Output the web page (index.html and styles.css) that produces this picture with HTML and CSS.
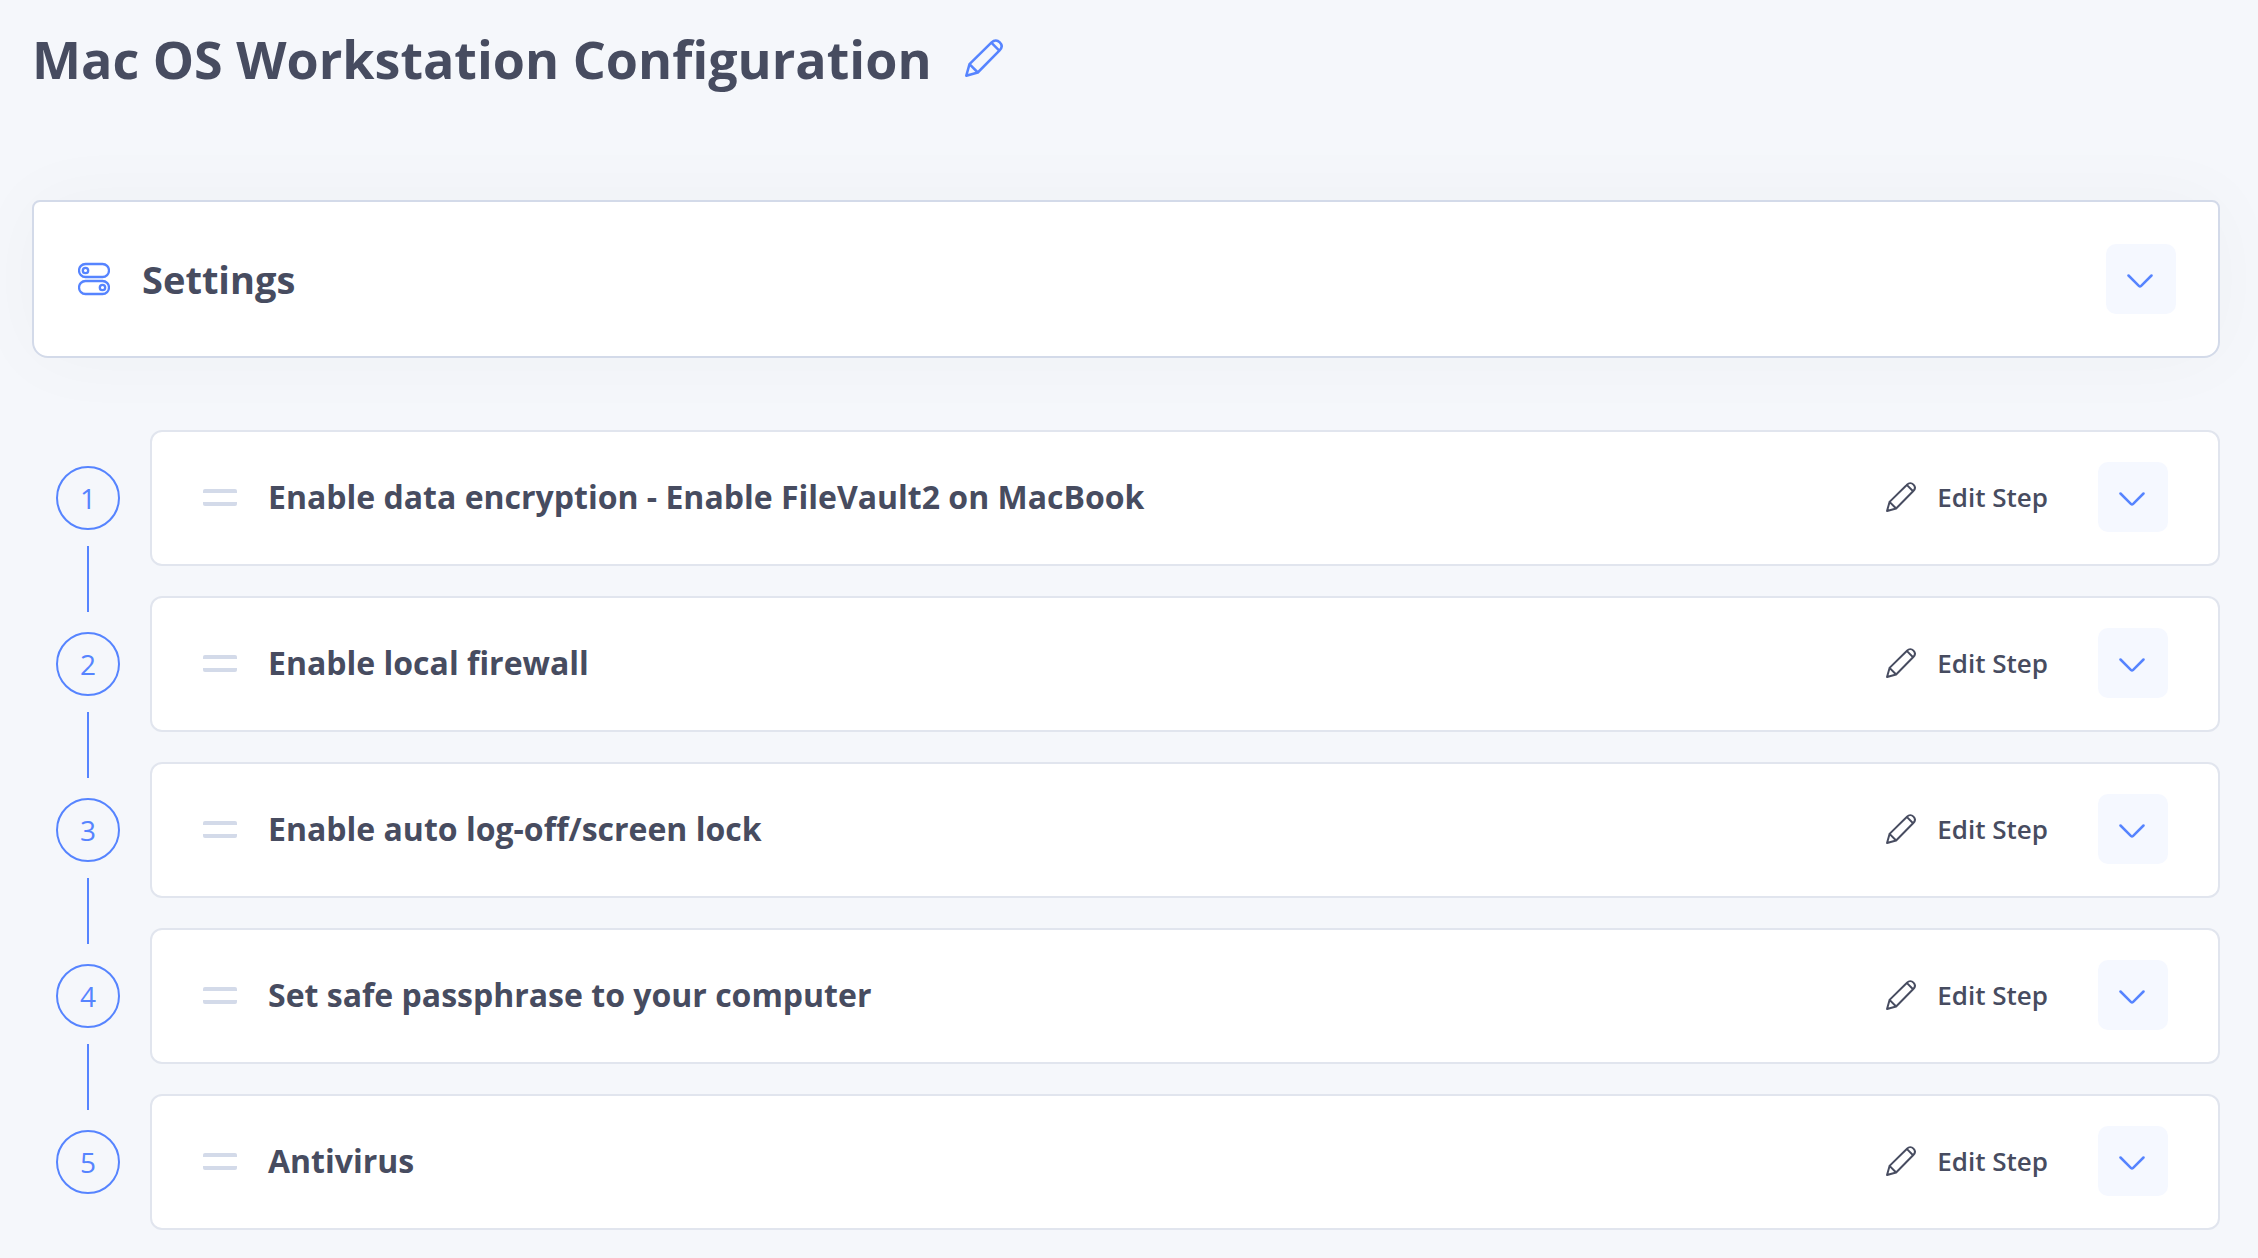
FILE: index.html
```html
<!DOCTYPE html>
<html lang="en">
<head>
<meta charset="utf-8">
<meta name="viewport" content="width=device-width, initial-scale=1">
<title>Mac OS Workstation Configuration</title>
<link rel="stylesheet" href="styles.css">
</head>
<body>
<svg class="sprite" aria-hidden="true">
  <symbol id="pencil" viewBox="0 0 38 38">
    <path d="M1.3 36.7 4.5 25.2 26.6 3.4C29.3.7 32.4.9 34.8 3.3s2.4 5.400-.2 8.100L12.800 33.500ZM4.500 25.200l8.300 8.300M26.300 3.700l8 8"/>
  </symbol>
  <symbol id="chevron" viewBox="0 0 26 14">
    <path d="m1.500 1.500 10.600 10.600q.9.800 1.800 0L24.500 1.500"/>
  </symbol>
</svg>
<main class="page">
  <header class="page-header">
    <h1 class="page-title">Mac OS Workstation Configuration</h1>
    <button class="icon-button" type="button" aria-label="Edit title"><svg class="pencil pencil-large"><use href="#pencil"/></svg></button>
  </header>

  <section class="settings">
    <svg class="settings-icon" viewBox="0 0 32 34" aria-hidden="true">
      <rect x="1" y="2" width="30" height="13" rx="6.500"/>
      <circle cx="7.500" cy="8.500" r="2.700"/>
      <rect x="1" y="19" width="30" height="13" rx="6.500"/>
      <circle cx="24.500" cy="25.500" r="2.700"/>
    </svg>
    <h2 class="settings-title">Settings</h2>
    <button class="toggle" type="button" aria-label="Expand settings"><svg class="chevron"><use href="#chevron"/></svg></button>
  </section>

  <ol class="steps">
    <li class="step">
      <div class="marker"><span class="number">1</span></div>
      <article class="card">
        <button class="handle" type="button" aria-label="Reorder step 1"></button>
        <h3 class="step-title">Enable data encryption - Enable FileVault2 on MacBook</h3>
        <button class="edit" type="button"><svg class="pencil"><use href="#pencil"/></svg>Edit Step</button>
        <button class="toggle" type="button" aria-label="Expand step 1"><svg class="chevron"><use href="#chevron"/></svg></button>
      </article>
    </li>
    <li class="step">
      <div class="marker"><span class="number">2</span></div>
      <article class="card">
        <button class="handle" type="button" aria-label="Reorder step 2"></button>
        <h3 class="step-title">Enable local firewall</h3>
        <button class="edit" type="button"><svg class="pencil"><use href="#pencil"/></svg>Edit Step</button>
        <button class="toggle" type="button" aria-label="Expand step 2"><svg class="chevron"><use href="#chevron"/></svg></button>
      </article>
    </li>
    <li class="step">
      <div class="marker"><span class="number">3</span></div>
      <article class="card">
        <button class="handle" type="button" aria-label="Reorder step 3"></button>
        <h3 class="step-title">Enable auto log-off/screen lock</h3>
        <button class="edit" type="button"><svg class="pencil"><use href="#pencil"/></svg>Edit Step</button>
        <button class="toggle" type="button" aria-label="Expand step 3"><svg class="chevron"><use href="#chevron"/></svg></button>
      </article>
    </li>
    <li class="step">
      <div class="marker"><span class="number">4</span></div>
      <article class="card">
        <button class="handle" type="button" aria-label="Reorder step 4"></button>
        <h3 class="step-title">Set safe passphrase to your computer</h3>
        <button class="edit" type="button"><svg class="pencil"><use href="#pencil"/></svg>Edit Step</button>
        <button class="toggle" type="button" aria-label="Expand step 4"><svg class="chevron"><use href="#chevron"/></svg></button>
      </article>
    </li>
    <li class="step">
      <div class="marker"><span class="number">5</span></div>
      <article class="card">
        <button class="handle" type="button" aria-label="Reorder step 5"></button>
        <h3 class="step-title">Antivirus</h3>
        <button class="edit" type="button"><svg class="pencil"><use href="#pencil"/></svg>Edit Step</button>
        <button class="toggle" type="button" aria-label="Expand step 5"><svg class="chevron"><use href="#chevron"/></svg></button>
      </article>
    </li>
  </ol>
</main>
</body>
</html>
```
FILE: styles.css
```css
:root {
  --ink: #474c60;
  --blue: #5684ff;
  --line: #d3dae9;
  --line-soft: #e1e5ee;
}

* {
  box-sizing: border-box;
}

body {
  margin: 0;
  background: #f5f7fb;
  color: var(--ink);
  font-family: "Open Sans", "Noto Sans", sans-serif;
}

h1,
h2,
h3 {
  margin: 0;
  font-weight: 700;
}

button {
  margin: 0;
  padding: 0;
  border: 0;
  background: none;
  color: inherit;
  font: inherit;
  cursor: pointer;
}

svg {
  display: block;
  fill: none;
  stroke: currentColor;
  stroke-width: 2;
  stroke-linecap: round;
  stroke-linejoin: round;
}

.sprite {
  display: none;
}

/* symbols take their stroke from the svg that uses them */
symbol {
  stroke-width: inherit;
}

.page {
  padding: 24px 38px 28px 32px;
}

.page-header {
  display: flex;
  align-items: center;
  gap: 33px;
  margin-bottom: 106px;
}

.page-title {
  font-size: 52px;
  line-height: 70px;
}

.icon-button {
  padding-bottom: 2px;
  color: var(--blue);
}

.pencil {
  width: 30px;
  height: 30px;
}

.pencil-large {
  width: 38px;
  height: 38px;
}

.pencil,
.chevron {
  stroke-width: 2.5;
}

.settings {
  display: flex;
  align-items: center;
  padding: 42px 42px 42px 44px;
  border: 2px solid var(--line);
  border-radius: 8px 8px 16px 16px;
  background: #fff;
  box-shadow: 0 0 80px rgba(0, 0, 0, 0.03);
}

.settings-icon {
  width: 32px;
  height: 34px;
  margin-right: 32px;
  color: var(--blue);
  stroke-width: 2.3;
}

.settings-title {
  flex: 1;
  font-size: 38px;
  line-height: 52px;
}

.toggle {
  display: grid;
  place-items: center;
  width: 70px;
  height: 70px;
  padding: 4px 2px 0 0;
  border-radius: 10px;
  background: #f5f8ff;
  color: var(--blue);
}

.chevron {
  width: 26px;
  height: 14px;
}

.steps {
  display: grid;
  gap: 30px;
  margin: 72px 0 0;
  padding: 0;
  list-style: none;
}

.step {
  display: grid;
  grid-template-columns: 118px 1fr;
}

.marker {
  position: relative;
  display: flex;
  align-items: center;
  padding-left: 24px;
}

.number {
  width: 64px;
  height: 64px;
  border: 2px solid var(--blue);
  border-radius: 50%;
  color: var(--blue);
  font-size: 28px;
  line-height: 60px;
  text-align: center;
}

/* connector to the next step, drawn across the gap between rows */
.step:not(:last-child) .marker::after {
  content: "";
  position: absolute;
  top: 116px;
  bottom: -46px;
  left: 55px;
  width: 2px;
  background: var(--blue);
}

.card {
  display: flex;
  align-items: center;
  padding: 30px 50px 32px 51px;
  border: 2px solid var(--line-soft);
  border-radius: 12px;
  background: #fff;
}

.handle {
  width: 34px;
  height: 17px;
  margin-right: 31px;
  background:
    linear-gradient(var(--line) 0 0) top / 100% 4px no-repeat,
    linear-gradient(var(--line) 0 0) bottom / 100% 4px no-repeat;
  border-radius: 2px;
}

.step-title {
  flex: 1;
  font-size: 32px;
  line-height: 44px;
}

.edit {
  display: flex;
  align-items: center;
  gap: 21px;
  margin-right: 50px;
  font-size: 26px;
  font-weight: 600;
  line-height: 36px;
}
```
